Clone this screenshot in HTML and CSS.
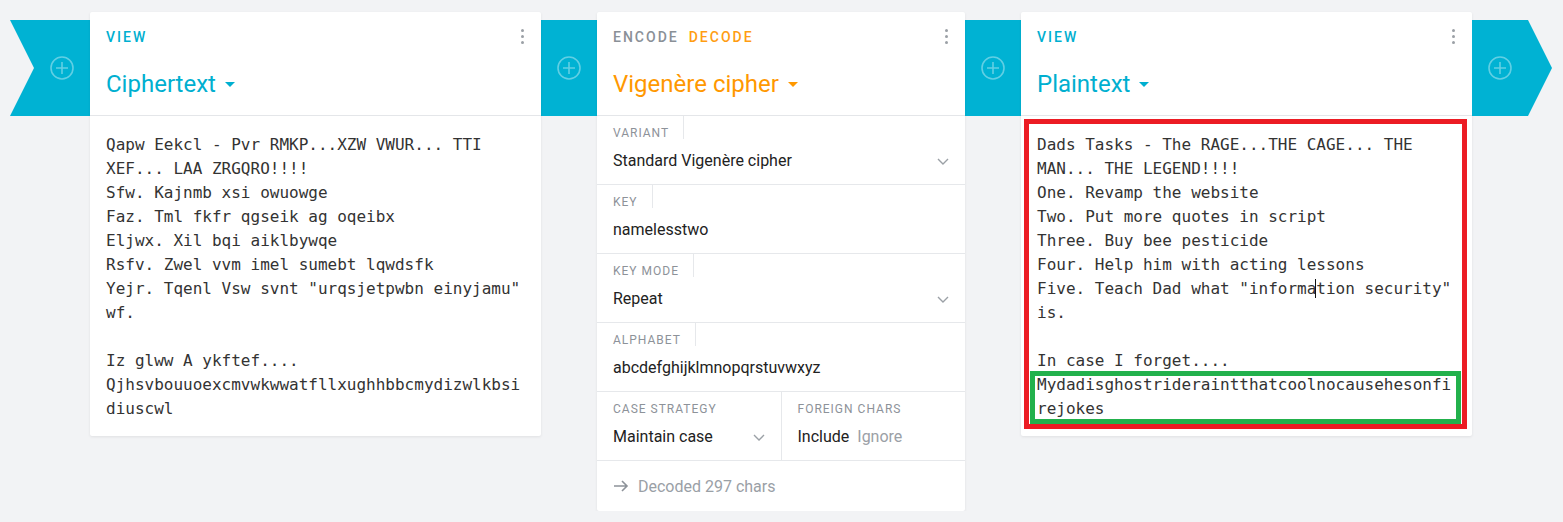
FILE: index.html
```html
<!DOCTYPE html>
<html lang="en">
<head>
<meta charset="utf-8">
<title>Cryptii pipeline</title>
<link rel="stylesheet" href="styles.css">
</head>
<body>
<div class="pipeline">
  <div class="band band-start">
    <svg class="plus" viewBox="0 0 24 24" width="24" height="24"><circle cx="12" cy="12" r="11"/><path d="M12 6v12M6 12h12"/></svg>
  </div>

  <section class="card card-wide">
    <header class="card-head">
      <div class="head-row">
        <span class="tab tab-cyan">View</span>
        <span class="kebab"><i></i><i></i><i></i></span>
      </div>
      <div class="title title-cyan">Ciphertext<span class="caret-down"></span></div>
    </header>
    <div class="text-body">Qapw Eekcl - Pvr RMKP...XZW VWUR... TTI XEF... LAA ZRGQRO!!!!
Sfw. Kajnmb xsi owuowge
Faz. Tml fkfr qgseik ag oqeibx
Eljwx. Xil bqi aiklbywqe
Rsfv. Zwel vvm imel sumebt lqwdsfk
Yejr. Tqenl Vsw svnt "urqsjetpwbn einyjamu" wf.

Iz glww A ykftef....
Qjhsvbouuoexcmvwkwwatfllxughhbbcmydizwlkbsidiuscwl</div>
  </section>

  <div class="band band-mid">
    <svg class="plus" viewBox="0 0 24 24" width="24" height="24"><circle cx="12" cy="12" r="11"/><path d="M12 6v12M6 12h12"/></svg>
  </div>

  <section class="card card-narrow">
    <header class="card-head">
      <div class="head-row">
        <span class="tab tab-gray">Encode</span>
        <span class="tab tab-orange">Decode</span>
        <span class="kebab"><i></i><i></i><i></i></span>
      </div>
      <div class="title title-orange">Vigenère cipher<span class="caret-down"></span></div>
    </header>
    <div class="field">
      <div class="field-label">Variant</div>
      <div class="field-value">Standard Vigenère cipher<svg class="chev" viewBox="0 0 12 7" width="12" height="7"><path d="M1 1l5 5 5-5"/></svg></div>
    </div>
    <div class="field">
      <div class="field-label">Key</div>
      <div class="field-value">namelesstwo</div>
    </div>
    <div class="field">
      <div class="field-label">Key mode</div>
      <div class="field-value">Repeat<svg class="chev" viewBox="0 0 12 7" width="12" height="7"><path d="M1 1l5 5 5-5"/></svg></div>
    </div>
    <div class="field">
      <div class="field-label">Alphabet</div>
      <div class="field-value">abcdefghijklmnopqrstuvwxyz</div>
    </div>
    <div class="field-row">
      <div class="field field-half field-split">
        <div class="field-label field-label-plain">Case strategy</div>
        <div class="field-value">Maintain case<svg class="chev" viewBox="0 0 12 7" width="12" height="7"><path d="M1 1l5 5 5-5"/></svg></div>
      </div>
      <div class="field field-half">
        <div class="field-label field-label-plain">Foreign chars</div>
        <div class="field-value field-toggle"><span class="opt-on">Include</span><span class="opt-off">Ignore</span></div>
      </div>
    </div>
    <footer class="card-foot">
      <svg class="arrow" viewBox="0 0 16 12" width="16" height="12"><path d="M1 6h13M9 1l5 5-5 5"/></svg>
      <span>Decoded 297 chars</span>
    </footer>
  </section>

  <div class="band band-mid">
    <svg class="plus" viewBox="0 0 24 24" width="24" height="24"><circle cx="12" cy="12" r="11"/><path d="M12 6v12M6 12h12"/></svg>
  </div>

  <section class="card card-wide">
    <header class="card-head">
      <div class="head-row">
        <span class="tab tab-cyan">View</span>
        <span class="kebab"><i></i><i></i><i></i></span>
      </div>
      <div class="title title-cyan">Plaintext<span class="caret-down"></span></div>
    </header>
    <div class="text-body">Dads Tasks - The RAGE...THE CAGE... THE MAN... THE LEGEND!!!!
One. Revamp the website
Two. Put more quotes in script
Three. Buy bee pesticide
Four. Help him with acting lessons
Five. Teach Dad what "information security" is.

In case I forget....
Mydadisghostrideraintthatcoolnocausehesonfirejokes</div>
    <div class="text-caret"></div>
    <div class="mark mark-red"></div>
    <div class="mark mark-green"></div>
  </section>

  <div class="band band-end">
    <svg class="plus" viewBox="0 0 24 24" width="24" height="24"><circle cx="12" cy="12" r="11"/><path d="M12 6v12M6 12h12"/></svg>
  </div>
</div>
</body>
</html>
```

FILE: styles.css
```css
* { box-sizing: border-box; }

body {
  margin: 0;
  background: #f2f3f5;
  font-family: Roboto, "Noto Sans", Arial, sans-serif;
  color: #222;
}

.pipeline {
  display: flex;
  align-items: flex-start;
  padding: 12px 0 0 10px;
}

.band {
  flex: none;
  height: 96px;
  margin-top: 8px;
  background: #00b2d3;
  display: flex;
  align-items: center;
  justify-content: center;
}

.band-start {
  width: 80px;
  padding-left: 24px;
  clip-path: polygon(0 0, 100% 0, 100% 100%, 0 100%, 24px 50%);
}

.band-mid { width: 56px; }

.band-end {
  width: 80px;
  padding-right: 24px;
  clip-path: polygon(0 0, calc(100% - 24px) 0, 100% 50%, calc(100% - 24px) 100%, 0 100%);
}

.plus {
  fill: none;
  stroke: rgba(255, 255, 255, 0.38);
  stroke-width: 1.6;
}

.card {
  flex: none;
  position: relative;
  background: #fff;
  border-radius: 2px;
  box-shadow: 0 1px 3px rgba(0, 0, 0, 0.08);
}

.card-wide { width: 451px; }
.card-narrow { width: 368px; }

.card-head {
  padding: 16px 16px 15px;
  border-bottom: 1px solid #e4e6e9;
}

.head-row {
  display: flex;
  align-items: center;
  gap: 10px;
  height: 18px;
}

.tab {
  font-size: 14px;
  font-weight: 500;
  letter-spacing: 2px;
  text-transform: uppercase;
  line-height: 18px;
}

.tab-cyan { color: #00afd0; }
.tab-gray { color: #8a9097; }
.tab-orange { color: #ff9d12; }

.kebab {
  margin-left: auto;
  margin-right: 1px;
  display: flex;
  flex-direction: column;
  gap: 3px;
  margin-top: -2px;
}

.kebab i {
  display: block;
  width: 3px;
  height: 3px;
  border-radius: 50%;
  background: #9ba0a6;
}

.title {
  margin-top: 22px;
  height: 32px;
  display: flex;
  align-items: center;
  font-size: 24px;
  line-height: 32px;
}

.title-cyan { color: #00afd0; }
.title-orange { color: #ff9800; }

.caret-down {
  width: 0;
  height: 0;
  margin-left: 9px;
  border-left: 5.5px solid transparent;
  border-right: 5.5px solid transparent;
  border-top: 5.5px solid currentColor;
}

.text-body {
  padding: 17px 16px 15px;
  font-family: "DejaVu Sans Mono", "Liberation Mono", monospace;
  font-size: 16px;
  line-height: 24px;
  color: #333;
  white-space: pre-wrap;
  overflow-wrap: anywhere;
}

.text-caret {
  position: absolute;
  left: 294px;
  top: 267px;
  height: 19px;
  border-left: 1px solid #111;
  pointer-events: none;
}

.field {
  border-bottom: 1px solid #e6e8eb;
  padding-bottom: 11px;
}

.field-label {
  display: block;
  width: max-content;
  height: 23px;
  padding: 11px 14px 0 16px;
  border-right: 1px solid #e6e8eb;
  font-size: 12px;
  line-height: 12px;
  letter-spacing: 1px;
  text-transform: uppercase;
  color: #8d9299;
}

.field-label-plain { border-right: none; }

.field-value {
  margin-top: 10px;
  padding: 0 16px;
  height: 24px;
  display: flex;
  align-items: center;
  justify-content: space-between;
  font-size: 16px;
  line-height: 24px;
  color: #222;
}

.chev {
  flex: none;
  fill: none;
  stroke: #9ba0a6;
  stroke-width: 1.4;
}

.field-row {
  display: flex;
  border-bottom: 1px solid #e6e8eb;
}

.field-row .field { border-bottom: none; }

.field-half { flex: 1 1 0; }

.field-split { border-right: 1px solid #e6e8eb; }

.field-toggle {
  justify-content: flex-start;
  gap: 8px;
}

.opt-off { color: #9ba0a6; }

.card-foot {
  height: 50px;
  padding: 0 16px;
  display: flex;
  align-items: center;
  gap: 9px;
  font-size: 16px;
  color: #9aa0a6;
}

.arrow {
  flex: none;
  fill: none;
  stroke: #8d9299;
  stroke-width: 1.6;
}

.mark {
  position: absolute;
  pointer-events: none;
}

.mark-red {
  left: 3px;
  top: 107px;
  width: 443px;
  height: 310px;
  border: 5px solid #ec1c24;
}

.mark-green {
  left: 9px;
  top: 359px;
  width: 431px;
  height: 53px;
  border: 5px solid #22b14c;
}
```
